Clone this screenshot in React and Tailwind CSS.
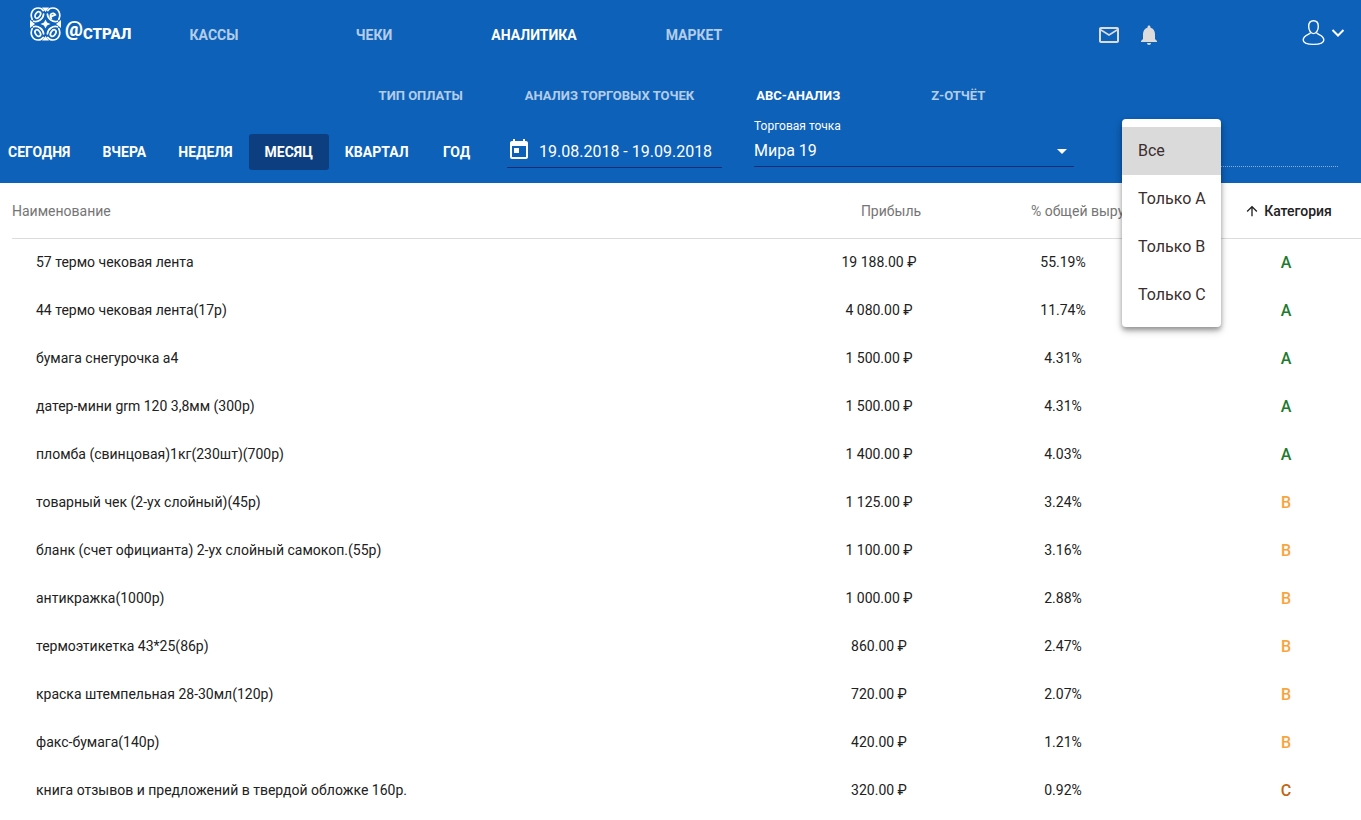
import { useState } from "react";
import {
  MdMailOutline,
  MdNotifications,
  MdToday,
  MdArrowDropDown,
  MdArrowUpward,
} from "react-icons/md";

const mainTabs = ["КАССЫ", "ЧЕКИ", "АНАЛИТИКА", "МАРКЕТ"];
const subTabs = ["ТИП ОПЛАТЫ", "АНАЛИЗ ТОРГОВЫХ ТОЧЕК", "АВС-АНАЛИЗ", "Z-ОТЧЁТ"];
const periods = ["СЕГОДНЯ", "ВЧЕРА", "НЕДЕЛЯ", "МЕСЯЦ", "КВАРТАЛ", "ГОД"];
const categories = ["Все", "Только A", "Только B", "Только C"];

const products = [
  { name: "57 термо чековая лента", profit: "19 188.00 ₽", share: "55.19%", category: "A" },
  { name: "44 термо чековая лента(17р)", profit: "4 080.00 ₽", share: "11.74%", category: "A" },
  { name: "бумага снегурочка а4", profit: "1 500.00 ₽", share: "4.31%", category: "A" },
  { name: "датер-мини grm 120 3,8мм (300р)", profit: "1 500.00 ₽", share: "4.31%", category: "A" },
  { name: "пломба (свинцовая)1кг(230шт)(700р)", profit: "1 400.00 ₽", share: "4.03%", category: "A" },
  { name: "товарный чек (2-ух слойный)(45р)", profit: "1 125.00 ₽", share: "3.24%", category: "B" },
  { name: "бланк (счет официанта) 2-ух слойный самокоп.(55р)", profit: "1 100.00 ₽", share: "3.16%", category: "B" },
  { name: "антикражка(1000р)", profit: "1 000.00 ₽", share: "2.88%", category: "B" },
  { name: "термоэтикетка 43*25(86р)", profit: "860.00 ₽", share: "2.47%", category: "B" },
  { name: "краска штемпельная 28-30мл(120р)", profit: "720.00 ₽", share: "2.07%", category: "B" },
  { name: "факс-бумага(140р)", profit: "420.00 ₽", share: "1.21%", category: "B" },
  { name: "книга отзывов и предложений в твердой обложке 160р.", profit: "320.00 ₽", share: "0.92%", category: "C" },
];

const categoryColors = {
  A: "text-[#1b7a2c]",
  B: "text-[#f9a43a]",
  C: "text-[#bf6612]",
};

function Logo() {
  return (
    <a href="#" className="flex w-[104px] shrink-0 items-start gap-1 text-white">
      <svg width="31" height="34" viewBox="0 0 31 34" fill="none" stroke="currentColor" strokeLinecap="round">
        <g strokeWidth="1.7">
          <path d="M2.2 12.4C-.4 7 2.6 1 8.2 1C10.6 1 12.4 2 13.2 3.6M3.6 14.2C8 15.6 13.4 12 13.6 7" />
          <ellipse cx="7.8" cy="7.9" rx="2.3" ry="3.6" transform="rotate(35 7.8 7.9)" />
          <path d="M28.8 12.4C31.4 7 28.4 1 22.8 1C20.4 1 18.6 2 17.8 3.6M27.4 14.2C23 15.6 17.6 12 17.4 7" />
          <path d="M20.8 9.6L25.4 7.8A2.7 2.7 0 1 0 21.4 11.2" />
          <path d="M2.2 21.6C-.4 27 2.6 33 8.2 33C10.6 33 12.4 32 13.2 30.4M3.6 19.8C8 18.4 13.4 22 13.6 27" />
          <ellipse cx="7.8" cy="26.1" rx="2.3" ry="3.6" transform="rotate(-35 7.8 26.1)" />
          <path d="M28.8 21.6C31.4 27 28.4 33 22.8 33C20.4 33 18.6 32 17.8 30.4M27.4 19.8C23 18.4 17.6 22 17.4 27" />
          <ellipse cx="23.2" cy="26.1" rx="2.3" ry="3.6" transform="rotate(35 23.2 26.1)" />
        </g>
        <g fill="currentColor" stroke="none">
          <path d="M15.5 12.5L17 15.5L20.5 17L17 18.5L15.5 21.5L14 18.5L10.5 17L14 15.5Z" />
          <path d="M0 13L5 17L0 21Z" />
          <path d="M31 13L26 17L31 21Z" />
          <path d="M12 .4H19L15.5 5Z" />
          <path d="M12 33.6H19L15.5 29Z" />
        </g>
      </svg>
      <span className="flex items-start pt-3 font-black">
        <span className="text-[20px] leading-5">@</span>
        <span className="text-[15px] leading-[30px]">СТРАЛ</span>
      </span>
    </a>
  );
}

function UserIcon() {
  return (
    <svg width="24" height="28" viewBox="0 0 24 28" fill="none" stroke="currentColor" strokeWidth="1.4">
      <path d="M12.5 1.7C15.5 1.7 17.3 4 17.3 7.4C17.3 11.2 15.3 14.6 12.5 14.6C9.7 14.6 7.7 11.2 7.7 7.4C7.7 4 9.5 1.7 12.5 1.7Z" />
      <path d="M9.6 13.6C8.6 16 2.2 15.6 2.2 21C2.2 24.2 6.4 25.4 12.5 25.4C18.6 25.4 22.8 24.2 22.8 21C22.8 15.6 16.4 16 15.4 13.6" />
    </svg>
  );
}

export default function App() {
  const [mainTab, setMainTab] = useState("АНАЛИТИКА");
  const [subTab, setSubTab] = useState("АВС-АНАЛИЗ");
  const [period, setPeriod] = useState("МЕСЯЦ");
  const [dates, setDates] = useState("19.08.2018 - 19.09.2018");
  const [category, setCategory] = useState("Все");
  const [menuOpen, setMenuOpen] = useState(true);

  const visible = products.filter(
    (p) => category === "Все" || category.endsWith(p.category)
  );

  return (
    <main className="min-h-screen overflow-x-hidden bg-white font-['Roboto',sans-serif] text-[#212121]">
      <header className="bg-[#0d61b9] text-white">
        <div className="flex h-[70px] items-start">
          <div className="pt-[7px] pl-[30px]">
            <Logo />
          </div>
          <nav className="flex h-full flex-1 items-center">
            {mainTabs.map((tab) => (
              <button
                key={tab}
                onClick={() => setMainTab(tab)}
                className={`w-40 text-sm font-bold ${mainTab === tab ? "text-white" : "text-white/70"}`}
              >
                {tab}
              </button>
            ))}
          </nav>
          <div className="flex h-full items-center pr-4">
            <div className="mr-[140px] flex gap-4 text-[#dcdcdc]">
              <button aria-label="Сообщения">
                <MdMailOutline size={24} />
              </button>
              <button aria-label="Уведомления">
                <MdNotifications size={24} />
              </button>
            </div>
            <button aria-label="Профиль" className="flex items-center gap-1.5 pb-1">
              <UserIcon />
              <svg width="14" height="8" viewBox="0 0 14 8" fill="none" stroke="currentColor" strokeWidth="2">
                <path d="M1.5 1L7 6.5L12.5 1" />
              </svg>
            </button>
          </div>
        </div>

        <nav className="flex h-[50px] items-center justify-center pt-0.5 pl-[18px]">
          {subTabs.map((tab) => (
            <button
              key={tab}
              onClick={() => setSubTab(tab)}
              className={`min-w-40 px-6 text-[13px] font-bold ${subTab === tab ? "text-white" : "text-white/70"}`}
            >
              {tab}
            </button>
          ))}
        </nav>

        <div className="flex h-[63px] items-start pr-[23px]">
          <div className="-ml-2 flex w-[515px] shrink-0 pt-3.5">
            {periods.map((item) => (
              <button
                key={item}
                onClick={() => setPeriod(item)}
                className={`h-9 min-w-16 rounded-[3px] px-4 text-sm font-bold ${period === item ? "bg-[#0d3e80]" : ""}`}
              >
                {item}
              </button>
            ))}
          </div>

          <label className="mt-3 flex h-9 w-[215px] shrink-0 items-center gap-2 border-b border-[#1b2d72]">
            <MdToday size={24} className="shrink-0" />
            <input
              aria-label="Период"
              value={dates}
              onChange={(e) => setDates(e.target.value)}
              className="w-full min-w-0 bg-transparent pt-1 text-base outline-none"
            />
          </label>

          <div className="ml-8 flex h-[47px] min-w-0 flex-1 flex-col border-b border-[#1b2d72]">
            <label htmlFor="store" className="text-xs leading-3">
              Торговая точка
            </label>
            <div className="relative flex flex-1 items-center">
              <select id="store" className="w-full appearance-none bg-transparent pt-1 text-base outline-none">
                <option>Мира 19</option>
              </select>
              <MdArrowDropDown size={24} className="pointer-events-none absolute right-0 mt-1" />
            </div>
          </div>

          <div className="relative ml-16 h-[47px] w-[200px] shrink-0 border-b border-dotted border-white/50">
            <button
              aria-label="Категория"
              aria-haspopup="listbox"
              aria-expanded={menuOpen}
              onClick={() => setMenuOpen(!menuOpen)}
              className="h-full w-full text-left"
            >
              {menuOpen ? "" : category}
            </button>
            {menuOpen && (
              <div
                role="listbox"
                className="absolute -top-px -left-4 z-10 flex w-[99px] flex-col rounded bg-white py-2 text-[#3a2e2e] shadow-[0_3px_5px_rgba(0,0,0,0.35),0_4px_10px_rgba(0,0,0,0.15)]"
              >
                {categories.map((item) => (
                  <button
                    key={item}
                    role="option"
                    aria-selected={category === item}
                    onClick={() => {
                      setCategory(item);
                      setMenuOpen(false);
                    }}
                    className={`h-12 px-4 text-left text-base whitespace-nowrap ${category === item ? "bg-[#dadada]" : ""}`}
                  >
                    {item}
                  </button>
                ))}
              </div>
            )}
          </div>
        </div>
      </header>

      <div className="pl-3">
        <table className="w-full table-fixed border-separate border-spacing-0 text-sm">
          <thead>
            <tr className="h-14 text-[#757575]">
              <th className="border-b border-[#dcdcdc] text-left font-normal">Наименование</th>
              <th className="w-[184px] border-b border-[#dcdcdc] pl-6 font-normal">Прибыль</th>
              <th className="w-[184px] border-b border-[#dcdcdc] pl-[60px] text-left font-normal whitespace-nowrap">
                % общей выручки
              </th>
              <th className="w-[206px] border-b border-[#dcdcdc] pl-[60px] font-medium text-[#212121]">
                <span className="flex items-center justify-center gap-1">
                  <MdArrowUpward size={16} />
                  Категория
                </span>
              </th>
            </tr>
          </thead>
          <tbody>
            {visible.map((product) => (
              <tr key={product.name} className="h-12">
                <td className="pb-0.5 pl-6">{product.name}</td>
                <td className="pb-0.5 text-center">{product.profit}</td>
                <td className="pb-0.5 text-center">{product.share}</td>
                <td className={`pl-14 text-center text-base font-medium ${categoryColors[product.category]}`}>
                  {product.category}
                </td>
              </tr>
            ))}
          </tbody>
        </table>
      </div>
    </main>
  );
}
